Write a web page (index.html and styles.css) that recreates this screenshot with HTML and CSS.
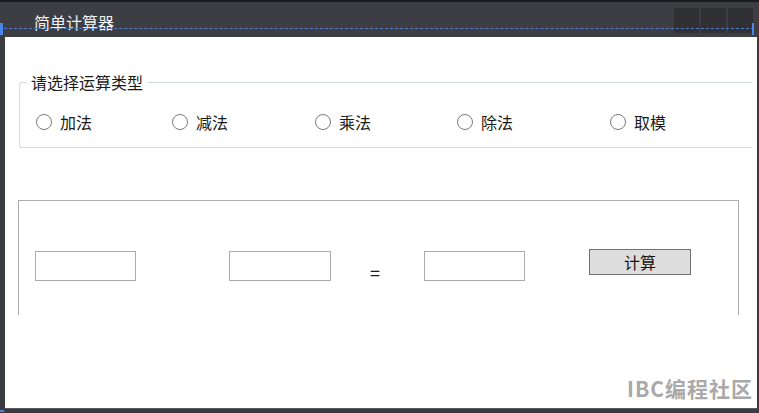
FILE: index.html
```html
<!DOCTYPE html>
<html lang="zh-CN">
  <head>
    <meta charset="UTF-8" />
    <title>简单计算器</title>
    <link rel="stylesheet" href="styles.css">
  </head>
  <body>
    <div class="window">
      <div class="titlebar">
        <span class="title">简单计算器</span>
        <div class="controls">
          <span class="ctl"></span>
          <span class="ctl"></span>
          <span class="ctl"></span>
        </div>
        <div class="sel-line"></div>
        <div class="sel-mark left"></div>
        <div class="sel-mark right"></div>
      </div>

      <div class="client">
        <fieldset class="op-group">
          <legend>请选择运算类型</legend>
          <div class="op-row">
            <label class="op"><input type="radio" name="op" value="add" />加法</label>
            <label class="op"><input type="radio" name="op" value="sub" />减法</label>
            <label class="op"><input type="radio" name="op" value="mul" />乘法</label>
            <label class="op"><input type="radio" name="op" value="div" />除法</label>
            <label class="op"><input type="radio" name="op" value="mod" />取模</label>
          </div>
        </fieldset>

        <div class="calc-box">
          <input type="text" class="num" id="a" />
          <input type="text" class="num second" id="b" />
          <span class="eq">=</span>
          <input type="text" class="num third" id="result" />
          <button type="button" class="btn-calc">计算</button>
        </div>

        <div class="watermark">IBC编程社区</div>
      </div>
      <div class="sel-mark bottom"></div>
    </div>
  </body>
</html>
```

FILE: styles.css
```css
* {
  margin: 0;
  padding: 0;
  box-sizing: border-box;
}

body {
  font-family: "Noto Sans CJK SC", "Microsoft YaHei", sans-serif;
  background: #3a3b40;
}

.window {
  width: 759px;
  height: 413px;
  background: #3a3b40;
  border-top: 2px solid #1c1c1e;
  display: flex;
  flex-direction: column;
  position: relative;
}

.titlebar {
  height: 35px;
  flex-shrink: 0;
  display: flex;
  align-items: flex-start;
  padding-left: 34px;
  position: relative;
  background: #3d3e44;
}

.title {
  color: #f2f2f2;
  font-size: 16px;
  line-height: 20px;
  margin-top: 10px;
}

.controls {
  margin-left: auto;
  margin-right: 6px;
  margin-top: 6px;
  display: flex;
  gap: 2px;
}

.ctl {
  width: 25px;
  height: 25px;
  background: #303035;
}

/* designer selection marks */
.sel-line {
  position: absolute;
  left: 4px;
  right: 5px;
  top: 26px;
  border-top: 1px dashed #4f7ccc;
}

.sel-mark {
  position: absolute;
  background: #4a86e8;
}

.sel-mark.left {
  left: 0;
  top: 21px;
  width: 3px;
  height: 12px;
}

.sel-mark.right {
  left: 752px;
  top: 21px;
  width: 2px;
  height: 12px;
}

.sel-mark.bottom {
  left: 0;
  bottom: 1px;
  width: 4px;
  height: 2px;
}

.client {
  flex: 1;
  margin: 0 2px 4px 5px;
  background: #fff;
  position: relative;
  overflow: hidden;
  border-bottom: 1px solid #5a5a5e;
}

.op-group {
  margin: 35px 0 0 14px;
  width: 733px;
  border: 1px solid #d6dce4;
  border-right: none;
  border-radius: 3px 0 0 3px;
  padding: 20px 0 15px 16px;
}

.op-group legend {
  margin-left: -9px;
  padding: 0 4px;
  font-size: 16px;
  line-height: 20px;
  color: #1a1a1a;
}

.op-row {
  display: grid;
  grid-template-columns: 136px 143px 142px 153px auto;
}

.op {
  display: flex;
  align-items: center;
  font-size: 16px;
  line-height: 20px;
  color: #1a1a1a;
}

.op input {
  appearance: none;
  width: 16px;
  height: 16px;
  border: 1px solid #7a7a7a;
  border-radius: 50%;
  margin-right: 8px;
  background: #fff;
}

.calc-box {
  margin: 52px 0 0 13px;
  width: 721px;
  height: 115px;
  border: 1px solid #adadad;
  border-bottom: none;
  display: flex;
  align-items: flex-start;
  padding: 50px 0 0 16px;
}

.num {
  width: 101px;
  height: 30px;
  border: 1px solid #ababab;
  background: #fff;
  font-size: 14px;
  outline: none;
}

.num.second {
  margin-left: 93px;
  width: 102px;
}

.eq {
  margin-left: 39px;
  margin-top: 10px;
  width: 11px;
  font-size: 18px;
  line-height: 22px;
  color: #1a1a1a;
}

.num.third {
  margin-left: 43px;
}

.btn-calc {
  margin-left: 64px;
  margin-top: -2px;
  width: 102px;
  height: 26px;
  background: #dddddd;
  border: 1px solid #707070;
  font-family: inherit;
  font-size: 16px;
  line-height: 20px;
  color: #111;
}

.watermark {
  position: absolute;
  right: 4px;
  bottom: 8px;
  font-size: 21px;
  line-height: 24px;
  letter-spacing: 1px;
  font-weight: bold;
  color: #a9a9a9;
}
```
